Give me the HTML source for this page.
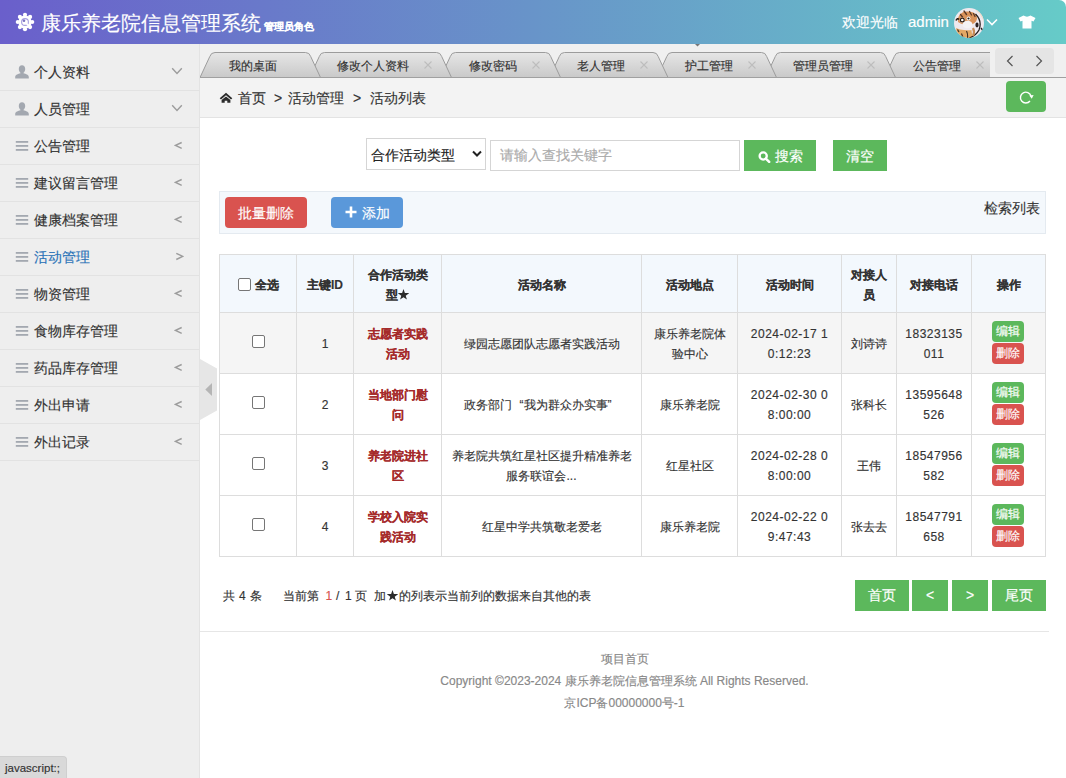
<!DOCTYPE html><html><head><meta charset="utf-8"><style>
*{box-sizing:border-box;margin:0;padding:0}
html,body{width:1066px;height:778px;overflow:hidden;background:#fff;font-family:"Liberation Sans",sans-serif;color:#333;font-size:12px;-webkit-text-stroke-width:0.15px}
.a{position:absolute;white-space:nowrap}
#hdr{position:absolute;left:0;top:0;width:1066px;height:44px;background:linear-gradient(90deg,#6a5fcb 0%,#6894c9 50%,#66cbc8 100%);border-top-right-radius:7px;color:#fff}
#side{position:absolute;left:0;top:44px;width:200px;height:734px;background:#eeeeee;border-right:1px solid #e3e3e3}
.mi{position:absolute;left:0;width:199px;height:37px;border-bottom:1px solid #e2e2e2;font-size:14px;color:#333}
.mi .t{position:absolute;left:34px;top:8px;line-height:20px}
.mi svg{position:absolute}
#tabs{position:absolute;left:200px;top:44px;width:866px;height:34px;background:#f0f0f0}
#crumb{position:absolute;left:200px;top:78px;width:866px;height:40px;background:#f3f3f3;border-bottom:1px solid #e3e3e3}
.btn{position:absolute;color:#fff;text-align:center;font-size:14px;white-space:nowrap}
.g{background:#5cb85c}
.r{background:#d9534f}
.cell{position:absolute;padding-top:2px;display:flex;align-items:center;justify-content:center;text-align:center;line-height:20px;font-size:12px;color:#333}
.th{font-weight:bold}
.num{letter-spacing:0.5px}
.red{color:#a52a2a;font-weight:bold}
.hl{position:absolute;background:#dddddd;height:1px}
.vl{position:absolute;background:#dddddd;width:1px}
.ab{position:absolute;left:992px;width:32px;height:21px;border-radius:4px;color:#fff;font-size:12px;line-height:21px;text-align:center}
</style></head><body>
<div id="hdr">
<svg class="a" style="left:15px;top:12px" width="20" height="20" viewBox="0 0 20 20">
<g fill="#fff">
<circle cx="10" cy="10" r="6.6"/>

<circle cx="17.20" cy="10.00" r="2.1"/>
<circle cx="15.09" cy="15.09" r="2.1"/>
<circle cx="10.00" cy="17.20" r="2.1"/>
<circle cx="4.91" cy="15.09" r="2.1"/>
<circle cx="2.80" cy="10.00" r="2.1"/>
<circle cx="4.91" cy="4.91" r="2.1"/>
<circle cx="10.00" cy="2.80" r="2.1"/>
<circle cx="15.09" cy="4.91" r="2.1"/>
</g><circle cx="10" cy="10" r="3.4" fill="none" stroke="#6a5fcb" stroke-width="1.1" opacity="0.6"/><circle cx="9" cy="8.8" r="1.3" fill="#5a4fb0" opacity="0.8"/><path d="M10 10 L14.5 14.5" stroke="#fff" stroke-width="1.6"/></svg>
<div class="a" style="left:41px;top:10px;font-size:20px;line-height:26px">康乐养老院信息管理系统<span style="font-size:10px;font-weight:bold;margin-left:3px">管理员角色</span></div>
<div class="a" style="left:842px;top:13px;font-size:14px;line-height:18px">欢迎光临</div>
<div class="a" style="left:908px;top:12px;font-size:15px;line-height:20px">admin</div>
<svg class="a" style="left:954px;top:8px" width="30" height="30" viewBox="0 0 30 30">
<defs><clipPath id="cp"><circle cx="15" cy="15" r="15"/></clipPath></defs>
<g clip-path="url(#cp)">
<rect width="30" height="30" fill="#efe9ee"/>
<path d="M22 0 L30 0 L30 14 Q27 6 22 3 Z" fill="#f0dcc8"/>
<path d="M4 10 Q6 4 12 3.5 Q19 3 22 6.5 Q24 10 22 13.5 Q19 17 14 17 Q8 17 4 14 Z" fill="#d9925a"/>
<path d="M10 3 L12.5 6.5 M15.5 3.5 L17.5 7 M19.5 5.5 L21 8.5 M6.5 6.5 L8.5 9" stroke="#5a3826" stroke-width="1.3" stroke-linecap="round"/>
<ellipse cx="13.5" cy="16.5" rx="5" ry="3.8" fill="#f5f2f4"/>
<circle cx="8.3" cy="12" r="2.6" fill="#fff"/>
<circle cx="8.3" cy="12" r="1.9" fill="none" stroke="#2a1a10" stroke-width="1.2"/>
<circle cx="14.5" cy="10.5" r="1.9" fill="#fff"/>
<circle cx="14.5" cy="10.5" r="1.1" fill="#2a1a10"/>
<path d="M2 12.5 Q3.5 9.5 5 11.5" stroke="#2a1a10" stroke-width="1.6" fill="none"/>
<path d="M2 20 Q6 22 10 22 Q15 22.5 17.5 22 L18.5 30 L5 30 Q2 25 2 20 Z" fill="#e2a865"/>
<path d="M12.5 23 Q14 26 13.5 30 M7.5 25.5 L9 29.5 M3.5 21.5 L5 24" stroke="#3b2b20" stroke-width="1.1" fill="none"/>
<path d="M21.5 6 Q28.5 13 25 22 Q22 27.5 15.5 30" stroke="#262020" stroke-width="1.3" fill="none"/>
<ellipse cx="23" cy="17" rx="1.6" ry="2.4" fill="#2a2020"/>
<path d="M19 20 Q21 24 19 28" stroke="#c58a55" stroke-width="2.2" fill="none"/>
<path d="M27 20 L30 24" stroke="#262020" stroke-width="1.4"/>
</g></svg>
<svg class="a" style="left:986px;top:18px" width="12" height="8" viewBox="0 0 12 8"><path d="M1 1.5 L6 6.5 L11 1.5" fill="none" stroke="#fff" stroke-width="1.6"/></svg>
<svg class="a" style="left:1018px;top:15px" width="18" height="14" viewBox="0 0 18 14"><path d="M5.5 0.5 Q9 2.8 12.5 0.5 L17.5 3 L15.5 6.5 L13.5 5.8 L13.5 13.5 L4.5 13.5 L4.5 5.8 L2.5 6.5 L0.5 3 Z" fill="#fff"/></svg>
</div>
<div id="side">
<div class="mi" style="top:10px">
<svg style="left:15px;top:11px" width="14" height="14" viewBox="0 0 14 14"><path d="M7 0.3 C9 0.3 10.2 1.8 10.2 4 C10.2 5.8 9.3 7.2 8.5 7.8 L8.5 8.3 C11 8.9 13.8 10 13.8 12 L13.8 13.6 L0.2 13.6 L0.2 12 C0.2 10 3 8.9 5.5 8.3 L5.5 7.8 C4.7 7.2 3.8 5.8 3.8 4 C3.8 1.8 5 0.3 7 0.3 Z" fill="#a3a8b0"/></svg>
<svg style="left:171px;top:13px" width="12" height="8" viewBox="0 0 12 8"><path d="M1.2 1.2 L6 6.4 L10.8 1.2" fill="none" stroke="#9c9c9c" stroke-width="1.4"/></svg>
<span class="t" style="color:#333">个人资料</span></div>
<div class="mi" style="top:47px">
<svg style="left:15px;top:11px" width="14" height="14" viewBox="0 0 14 14"><path d="M7 0.3 C9 0.3 10.2 1.8 10.2 4 C10.2 5.8 9.3 7.2 8.5 7.8 L8.5 8.3 C11 8.9 13.8 10 13.8 12 L13.8 13.6 L0.2 13.6 L0.2 12 C0.2 10 3 8.9 5.5 8.3 L5.5 7.8 C4.7 7.2 3.8 5.8 3.8 4 C3.8 1.8 5 0.3 7 0.3 Z" fill="#a3a8b0"/></svg>
<svg style="left:171px;top:13px" width="12" height="8" viewBox="0 0 12 8"><path d="M1.2 1.2 L6 6.4 L10.8 1.2" fill="none" stroke="#9c9c9c" stroke-width="1.4"/></svg>
<span class="t" style="color:#333">人员管理</span></div>
<div class="mi" style="top:84px">
<svg style="left:15px;top:13px" width="14" height="12" viewBox="0 0 14 12"><rect x="0.8" y="0" width="12.4" height="1.8" fill="#a3a8b0"/><rect x="0.8" y="4" width="12.4" height="1.8" fill="#a3a8b0"/><rect x="0.8" y="8" width="12.4" height="1.8" fill="#a3a8b0"/></svg>
<svg style="left:174px;top:13px" width="9" height="10" viewBox="0 0 9 10"><path d="M7.7 1.5 L1.5 4.4 L7.7 7.4" fill="none" stroke="#9c9c9c" stroke-width="1.4"/></svg>
<span class="t" style="color:#333">公告管理</span></div>
<div class="mi" style="top:121px">
<svg style="left:15px;top:13px" width="14" height="12" viewBox="0 0 14 12"><rect x="0.8" y="0" width="12.4" height="1.8" fill="#a3a8b0"/><rect x="0.8" y="4" width="12.4" height="1.8" fill="#a3a8b0"/><rect x="0.8" y="8" width="12.4" height="1.8" fill="#a3a8b0"/></svg>
<svg style="left:174px;top:13px" width="9" height="10" viewBox="0 0 9 10"><path d="M7.7 1.5 L1.5 4.4 L7.7 7.4" fill="none" stroke="#9c9c9c" stroke-width="1.4"/></svg>
<span class="t" style="color:#333">建议留言管理</span></div>
<div class="mi" style="top:158px">
<svg style="left:15px;top:13px" width="14" height="12" viewBox="0 0 14 12"><rect x="0.8" y="0" width="12.4" height="1.8" fill="#a3a8b0"/><rect x="0.8" y="4" width="12.4" height="1.8" fill="#a3a8b0"/><rect x="0.8" y="8" width="12.4" height="1.8" fill="#a3a8b0"/></svg>
<svg style="left:174px;top:13px" width="9" height="10" viewBox="0 0 9 10"><path d="M7.7 1.5 L1.5 4.4 L7.7 7.4" fill="none" stroke="#9c9c9c" stroke-width="1.4"/></svg>
<span class="t" style="color:#333">健康档案管理</span></div>
<div class="mi" style="top:195px">
<svg style="left:15px;top:13px" width="14" height="12" viewBox="0 0 14 12"><rect x="0.8" y="0" width="12.4" height="1.8" fill="#a3a8b0"/><rect x="0.8" y="4" width="12.4" height="1.8" fill="#a3a8b0"/><rect x="0.8" y="8" width="12.4" height="1.8" fill="#a3a8b0"/></svg>
<svg style="left:175px;top:13px" width="9" height="10" viewBox="0 0 9 10"><path d="M1.3 1.3 L7.7 4.3 L1.3 7.5" fill="none" stroke="#9c9c9c" stroke-width="1.4"/></svg>
<span class="t" style="color:#2b73b8">活动管理</span></div>
<div class="mi" style="top:232px">
<svg style="left:15px;top:13px" width="14" height="12" viewBox="0 0 14 12"><rect x="0.8" y="0" width="12.4" height="1.8" fill="#a3a8b0"/><rect x="0.8" y="4" width="12.4" height="1.8" fill="#a3a8b0"/><rect x="0.8" y="8" width="12.4" height="1.8" fill="#a3a8b0"/></svg>
<svg style="left:174px;top:13px" width="9" height="10" viewBox="0 0 9 10"><path d="M7.7 1.5 L1.5 4.4 L7.7 7.4" fill="none" stroke="#9c9c9c" stroke-width="1.4"/></svg>
<span class="t" style="color:#333">物资管理</span></div>
<div class="mi" style="top:269px">
<svg style="left:15px;top:13px" width="14" height="12" viewBox="0 0 14 12"><rect x="0.8" y="0" width="12.4" height="1.8" fill="#a3a8b0"/><rect x="0.8" y="4" width="12.4" height="1.8" fill="#a3a8b0"/><rect x="0.8" y="8" width="12.4" height="1.8" fill="#a3a8b0"/></svg>
<svg style="left:174px;top:13px" width="9" height="10" viewBox="0 0 9 10"><path d="M7.7 1.5 L1.5 4.4 L7.7 7.4" fill="none" stroke="#9c9c9c" stroke-width="1.4"/></svg>
<span class="t" style="color:#333">食物库存管理</span></div>
<div class="mi" style="top:306px">
<svg style="left:15px;top:13px" width="14" height="12" viewBox="0 0 14 12"><rect x="0.8" y="0" width="12.4" height="1.8" fill="#a3a8b0"/><rect x="0.8" y="4" width="12.4" height="1.8" fill="#a3a8b0"/><rect x="0.8" y="8" width="12.4" height="1.8" fill="#a3a8b0"/></svg>
<svg style="left:174px;top:13px" width="9" height="10" viewBox="0 0 9 10"><path d="M7.7 1.5 L1.5 4.4 L7.7 7.4" fill="none" stroke="#9c9c9c" stroke-width="1.4"/></svg>
<span class="t" style="color:#333">药品库存管理</span></div>
<div class="mi" style="top:343px">
<svg style="left:15px;top:13px" width="14" height="12" viewBox="0 0 14 12"><rect x="0.8" y="0" width="12.4" height="1.8" fill="#a3a8b0"/><rect x="0.8" y="4" width="12.4" height="1.8" fill="#a3a8b0"/><rect x="0.8" y="8" width="12.4" height="1.8" fill="#a3a8b0"/></svg>
<svg style="left:174px;top:13px" width="9" height="10" viewBox="0 0 9 10"><path d="M7.7 1.5 L1.5 4.4 L7.7 7.4" fill="none" stroke="#9c9c9c" stroke-width="1.4"/></svg>
<span class="t" style="color:#333">外出申请</span></div>
<div class="mi" style="top:380px">
<svg style="left:15px;top:13px" width="14" height="12" viewBox="0 0 14 12"><rect x="0.8" y="0" width="12.4" height="1.8" fill="#a3a8b0"/><rect x="0.8" y="4" width="12.4" height="1.8" fill="#a3a8b0"/><rect x="0.8" y="8" width="12.4" height="1.8" fill="#a3a8b0"/></svg>
<svg style="left:174px;top:13px" width="9" height="10" viewBox="0 0 9 10"><path d="M7.7 1.5 L1.5 4.4 L7.7 7.4" fill="none" stroke="#9c9c9c" stroke-width="1.4"/></svg>
<span class="t" style="color:#333">外出记录</span></div>
</div>
<svg class="a" style="left:200px;top:359px" width="18" height="62" viewBox="0 0 18 62"><path d="M0 0 L17 9.5 L17 51.5 L0 61 Z" fill="#e6e6e6"/><path d="M12 24 L12 37 L5.3 30.5 Z" fill="#b5b5b5"/></svg>
<div id="tabs">
<svg class="a" style="left:0;top:0" width="792" height="34" viewBox="200 44 792 34">
<defs><linearGradient id="tg" x1="0" y1="0" x2="0" y2="1"><stop offset="0" stop-color="#e6e6e6"/><stop offset="1" stop-color="#c9c9c9"/></linearGradient></defs>
<path d="M884.5 77.5 L894.3 56.5 Q895.5 52.5 899.5 52.5 L1000.5 52.5 Q1004.5 52.5 1005.7 56.5 L1015.5 77.5 Z" fill="url(#tg)" stroke="#9c9c9c" stroke-width="1"/>
<path d="M765.5 77.5 L775.3 56.5 Q776.5 52.5 780.5 52.5 L880.5 52.5 Q884.5 52.5 885.7 56.5 L895.5 77.5 Z" fill="url(#tg)" stroke="#9c9c9c" stroke-width="1"/>
<path d="M657.0 77.5 L666.8 56.5 Q668.0 52.5 672.0 52.5 L761.5 52.5 Q765.5 52.5 766.7 56.5 L776.5 77.5 Z" fill="url(#tg)" stroke="#9c9c9c" stroke-width="1"/>
<path d="M549.5 77.5 L559.3 56.5 Q560.5 52.5 564.5 52.5 L653.0 52.5 Q657.0 52.5 658.2 56.5 L668.0 77.5 Z" fill="url(#tg)" stroke="#9c9c9c" stroke-width="1"/>
<path d="M440.5 77.5 L450.3 56.5 Q451.5 52.5 455.5 52.5 L545.5 52.5 Q549.5 52.5 550.7 56.5 L560.5 77.5 Z" fill="url(#tg)" stroke="#9c9c9c" stroke-width="1"/>
<path d="M309.5 77.5 L319.3 56.5 Q320.5 52.5 324.5 52.5 L436.5 52.5 Q440.5 52.5 441.7 56.5 L451.5 77.5 Z" fill="url(#tg)" stroke="#9c9c9c" stroke-width="1"/>
<path d="M200.0 77.5 L209.8 56.5 Q211.0 52.5 215.0 52.5 L305.5 52.5 Q309.5 52.5 310.7 56.5 L320.5 77.5 Z" fill="url(#tg)" stroke="#9c9c9c" stroke-width="1"/>
</svg>
<div class="a" style="left:0;top:33px;width:866px;height:1px;background:#a0a0a0"></div>
<div class="a" style="left:29px;top:14px;font-size:12px;line-height:16px;color:#333">我的桌面</div>
<div class="a" style="left:137px;top:14px;font-size:12px;line-height:16px;color:#333">修改个人资料</div>
<svg class="a" style="left:223px;top:16px" width="10" height="10" viewBox="0 0 10 10"><path d="M1.5 1.5 L8.5 8.5 M8.5 1.5 L1.5 8.5" stroke="#bdbdbd" stroke-width="1.1"/></svg>
<div class="a" style="left:269px;top:14px;font-size:12px;line-height:16px;color:#333">修改密码</div>
<svg class="a" style="left:331px;top:16px" width="10" height="10" viewBox="0 0 10 10"><path d="M1.5 1.5 L8.5 8.5 M8.5 1.5 L1.5 8.5" stroke="#bdbdbd" stroke-width="1.1"/></svg>
<div class="a" style="left:377px;top:14px;font-size:12px;line-height:16px;color:#333">老人管理</div>
<svg class="a" style="left:439px;top:16px" width="10" height="10" viewBox="0 0 10 10"><path d="M1.5 1.5 L8.5 8.5 M8.5 1.5 L1.5 8.5" stroke="#bdbdbd" stroke-width="1.1"/></svg>
<div class="a" style="left:485px;top:14px;font-size:12px;line-height:16px;color:#333">护工管理</div>
<svg class="a" style="left:547px;top:16px" width="10" height="10" viewBox="0 0 10 10"><path d="M1.5 1.5 L8.5 8.5 M8.5 1.5 L1.5 8.5" stroke="#bdbdbd" stroke-width="1.1"/></svg>
<div class="a" style="left:593px;top:14px;font-size:12px;line-height:16px;color:#333">管理员管理</div>
<svg class="a" style="left:666px;top:16px" width="10" height="10" viewBox="0 0 10 10"><path d="M1.5 1.5 L8.5 8.5 M8.5 1.5 L1.5 8.5" stroke="#bdbdbd" stroke-width="1.1"/></svg>
<div class="a" style="left:713px;top:14px;font-size:12px;line-height:16px;color:#333">公告管理</div>
<svg class="a" style="left:775px;top:16px" width="10" height="10" viewBox="0 0 10 10"><path d="M1.5 1.5 L8.5 8.5 M8.5 1.5 L1.5 8.5" stroke="#bdbdbd" stroke-width="1.1"/></svg>
<div class="a" style="left:790px;top:0;width:76px;height:33px;background:#f0f0f0"></div>
<div class="a" style="left:795px;top:4px;width:59px;height:26px;background:#e5e5e5;border-radius:4px"></div>
<svg class="a" style="left:806px;top:11px" width="8" height="12" viewBox="0 0 8 12"><path d="M6.5 1 L1.5 6 L6.5 11" fill="none" stroke="#555" stroke-width="1.2"/></svg>
<svg class="a" style="left:835px;top:11px" width="8" height="12" viewBox="0 0 8 12"><path d="M1.5 1 L6.5 6 L1.5 11" fill="none" stroke="#555" stroke-width="1.2"/></svg>
<svg class="a" style="left:495px;top:0px" width="5" height="3" viewBox="0 0 5 3"><path d="M0 0 L5 0 L2.5 2.5 Z" fill="#777"/></svg>
</div>
<div id="crumb">
<svg class="a" style="left:19px;top:14px" width="14" height="12" viewBox="0 0 14 12"><path d="M7 0.8 L13.3 6.2 L12.0 7.4 L7 3.2 L2.0 7.4 L0.7 6.2 Z" fill="#2b2b2b"/><path d="M2.6 7.9 L7 4.4 L11.4 7.9 L11.4 10.8 L8.3 10.8 L8.3 8.8 L5.7 8.8 L5.7 10.8 L2.6 10.8 Z" fill="#2b2b2b"/></svg>
<div class="a" style="left:38px;top:10px;font-size:14px;line-height:20px">首页</div>
<div class="a" style="left:74px;top:10px;font-size:14px;line-height:20px">&gt;</div>
<div class="a" style="left:88px;top:10px;font-size:14px;line-height:20px">活动管理</div>
<div class="a" style="left:153px;top:10px;font-size:14px;line-height:20px">&gt;</div>
<div class="a" style="left:170px;top:10px;font-size:14px;line-height:20px">活动列表</div>
<div class="a" style="left:806px;top:3px;width:40px;height:31px;background:#5cb85c;border-radius:4px"></div>
<svg class="a" style="left:818px;top:12px" width="17" height="16" viewBox="0 0 17 16"><path d="M12.0 11.0 A5.4 5.4 0 1 1 13.0 6.0" fill="none" stroke="#fff" stroke-width="1.4"/><path d="M13.8 8.8 L11.3 5.6 L15.6 5.0 Z" fill="#fff"/></svg>
</div>
<div class="a" style="left:366px;top:138px;width:120px;height:32px;border:1px solid #d5d5d5;background:#fff"></div>
<div class="a" style="left:371px;top:145px;font-size:14px;line-height:20px;color:#222">合作活动类型</div>
<svg class="a" style="left:472px;top:150px" width="10" height="8" viewBox="0 0 10 8"><path d="M1 1.5 L5 5.5 L9 1.5" fill="none" stroke="#222" stroke-width="2"/></svg>
<div class="a" style="left:490px;top:140px;width:250px;height:31px;border:1px solid #d5d5d5;background:#fff"></div>
<div class="a" style="left:500px;top:145px;font-size:14px;line-height:20px;color:#aaa">请输入查找关键字</div>
<div class="btn g" style="left:744px;top:140px;width:72px;height:31px"></div>
<svg class="a" style="left:757.5px;top:150.5px" width="13" height="12" viewBox="0 0 13 12"><circle cx="5.2" cy="5" r="3.6" fill="none" stroke="#fff" stroke-width="2.3"/><path d="M7.8 7.6 L11.2 10.8" stroke="#fff" stroke-width="2.5" stroke-linecap="round"/></svg>
<div class="a" style="left:775px;top:146px;font-size:14px;line-height:20px;color:#fff">搜索</div>
<div class="btn g" style="left:833px;top:140px;width:54px;height:31px;line-height:33px">清空</div>
<div class="a" style="left:219px;top:191px;width:827px;height:43px;background:#f4f8fc;border:1px solid #e4eaf0"></div>
<div class="btn r" style="left:225px;top:197px;width:82px;height:31px;line-height:33px;border-radius:4px">批量删除</div>
<div class="btn" style="left:331px;top:197px;width:72px;height:31px;line-height:31px;border-radius:4px;background:#5a98da"></div>
<svg class="a" style="left:345px;top:206px" width="12" height="12" viewBox="0 0 12 12"><path d="M6 0.5 V11.5 M0.5 6 H11.5" stroke="#fff" stroke-width="2.6"/></svg>
<div class="a" style="left:362px;top:203px;font-size:14px;line-height:20px;color:#fff">添加</div>
<div class="a" style="left:984px;top:198px;font-size:14px;line-height:20px;color:#333">检索列表</div>
<div class="a" style="left:219px;top:254px;width:827px;height:58px;background:#f3f8fd"></div>
<div class="a" style="left:219px;top:312px;width:827px;height:61px;background:#f5f5f5"></div>
<div class="hl" style="left:219px;top:254px;width:827px"></div>
<div class="hl" style="left:219px;top:312px;width:827px"></div>
<div class="hl" style="left:219px;top:373px;width:827px"></div>
<div class="hl" style="left:219px;top:434px;width:827px"></div>
<div class="hl" style="left:219px;top:495px;width:827px"></div>
<div class="hl" style="left:219px;top:556px;width:827px"></div>
<div class="vl" style="left:219px;top:254px;height:303px"></div>
<div class="vl" style="left:296px;top:254px;height:303px"></div>
<div class="vl" style="left:353px;top:254px;height:303px"></div>
<div class="vl" style="left:441px;top:254px;height:303px"></div>
<div class="vl" style="left:641px;top:254px;height:303px"></div>
<div class="vl" style="left:737px;top:254px;height:303px"></div>
<div class="vl" style="left:841px;top:254px;height:303px"></div>
<div class="vl" style="left:896px;top:254px;height:303px"></div>
<div class="vl" style="left:971px;top:254px;height:303px"></div>
<div class="vl" style="left:1045px;top:254px;height:303px"></div>
<div class="cell th" style="left:220px;top:255px;width:76px;height:57px"><div><span style="position:relative;top:-1px"><span style="display:inline-block;width:13px;height:13px;border:1px solid #767676;border-radius:2px;background:#fff;vertical-align:middle"></span></span><span style="margin-left:4px">全选</span></div></div>
<div class="cell th" style="left:297px;top:255px;width:56px;height:57px"><div>主键ID</div></div>
<div class="cell th" style="left:354px;top:255px;width:87px;height:57px"><div>合作活动类<br>型<svg width="11" height="11" viewBox="0 0 11 11" style="vertical-align:-1px"><polygon points="5.50,0.10 6.88,4.00 11.02,4.11 7.73,6.63 8.91,10.59 5.50,8.25 2.09,10.59 3.27,6.63 -0.02,4.11 4.12,4.00" fill="#2b2b2b"/></svg></div></div>
<div class="cell th" style="left:442px;top:255px;width:199px;height:57px"><div>活动名称</div></div>
<div class="cell th" style="left:642px;top:255px;width:95px;height:57px"><div>活动地点</div></div>
<div class="cell th" style="left:738px;top:255px;width:103px;height:57px"><div>活动时间</div></div>
<div class="cell th" style="left:842px;top:255px;width:54px;height:57px"><div>对接人<br>员</div></div>
<div class="cell th" style="left:897px;top:255px;width:74px;height:57px"><div>对接电话</div></div>
<div class="cell th" style="left:972px;top:255px;width:73px;height:57px"><div>操作</div></div>
<div class="cell " style="left:220px;top:313px;width:76px;height:60px"><div><span style="position:relative;top:-3px"><span style="display:inline-block;width:13px;height:13px;border:1px solid #767676;border-radius:2px;background:#fff;vertical-align:middle"></span></span></div></div>
<div class="cell " style="left:297px;top:313px;width:56px;height:60px"><div>1</div></div>
<div class="cell red" style="left:354px;top:313px;width:87px;height:60px"><div>志愿者实践<br>活动</div></div>
<div class="cell " style="left:442px;top:313px;width:199px;height:60px"><div>绿园志愿团队志愿者实践活动</div></div>
<div class="cell " style="left:642px;top:313px;width:95px;height:60px"><div>康乐养老院体<br>验中心</div></div>
<div class="cell num" style="left:738px;top:313px;width:103px;height:60px"><div>2024-02-17 1<br>0:12:23</div></div>
<div class="cell " style="left:842px;top:313px;width:54px;height:60px"><div>刘诗诗</div></div>
<div class="cell num" style="left:897px;top:313px;width:74px;height:60px"><div>18323135<br>011</div></div>
<div class="ab g" style="top:321px">编辑</div>
<div class="ab r" style="top:343px">删除</div>
<div class="cell " style="left:220px;top:374px;width:76px;height:60px"><div><span style="position:relative;top:-3px"><span style="display:inline-block;width:13px;height:13px;border:1px solid #767676;border-radius:2px;background:#fff;vertical-align:middle"></span></span></div></div>
<div class="cell " style="left:297px;top:374px;width:56px;height:60px"><div>2</div></div>
<div class="cell red" style="left:354px;top:374px;width:87px;height:60px"><div>当地部门慰<br>问</div></div>
<div class="cell " style="left:442px;top:374px;width:199px;height:60px"><div>政务部门<span style="display:inline-block;width:12px;text-align:right">“</span>我为群众办实事<span style="display:inline-block;width:12px;text-align:left">”</span></div></div>
<div class="cell " style="left:642px;top:374px;width:95px;height:60px"><div>康乐养老院</div></div>
<div class="cell num" style="left:738px;top:374px;width:103px;height:60px"><div>2024-02-30 0<br>8:00:00</div></div>
<div class="cell " style="left:842px;top:374px;width:54px;height:60px"><div>张科长</div></div>
<div class="cell num" style="left:897px;top:374px;width:74px;height:60px"><div>13595648<br>526</div></div>
<div class="ab g" style="top:382px">编辑</div>
<div class="ab r" style="top:404px">删除</div>
<div class="cell " style="left:220px;top:435px;width:76px;height:60px"><div><span style="position:relative;top:-3px"><span style="display:inline-block;width:13px;height:13px;border:1px solid #767676;border-radius:2px;background:#fff;vertical-align:middle"></span></span></div></div>
<div class="cell " style="left:297px;top:435px;width:56px;height:60px"><div>3</div></div>
<div class="cell red" style="left:354px;top:435px;width:87px;height:60px"><div>养老院进社<br>区</div></div>
<div class="cell " style="left:442px;top:435px;width:199px;height:60px"><div>养老院共筑红星社区提升精准养老<br>服务联谊会...</div></div>
<div class="cell " style="left:642px;top:435px;width:95px;height:60px"><div>红星社区</div></div>
<div class="cell num" style="left:738px;top:435px;width:103px;height:60px"><div>2024-02-28 0<br>8:00:00</div></div>
<div class="cell " style="left:842px;top:435px;width:54px;height:60px"><div>王伟</div></div>
<div class="cell num" style="left:897px;top:435px;width:74px;height:60px"><div>18547956<br>582</div></div>
<div class="ab g" style="top:443px">编辑</div>
<div class="ab r" style="top:465px">删除</div>
<div class="cell " style="left:220px;top:496px;width:76px;height:60px"><div><span style="position:relative;top:-3px"><span style="display:inline-block;width:13px;height:13px;border:1px solid #767676;border-radius:2px;background:#fff;vertical-align:middle"></span></span></div></div>
<div class="cell " style="left:297px;top:496px;width:56px;height:60px"><div>4</div></div>
<div class="cell red" style="left:354px;top:496px;width:87px;height:60px"><div>学校入院实<br>践活动</div></div>
<div class="cell " style="left:442px;top:496px;width:199px;height:60px"><div>红星中学共筑敬老爱老</div></div>
<div class="cell " style="left:642px;top:496px;width:95px;height:60px"><div>康乐养老院</div></div>
<div class="cell num" style="left:738px;top:496px;width:103px;height:60px"><div>2024-02-22 0<br>9:47:43</div></div>
<div class="cell " style="left:842px;top:496px;width:54px;height:60px"><div>张去去</div></div>
<div class="cell num" style="left:897px;top:496px;width:74px;height:60px"><div>18547791<br>658</div></div>
<div class="ab g" style="top:504px">编辑</div>
<div class="ab r" style="top:526px">删除</div>
<div class="a" style="left:222.6px;top:586px;font-size:12px;line-height:20px;color:#333;word-spacing:1px">共 4 条</div>
<div class="a" style="left:282.6px;top:586px;font-size:12px;line-height:20px;color:#333">当前第</div>
<div class="a" style="left:325.5px;top:586px;font-size:12px;line-height:20px;color:#d9534f">1</div>
<div class="a" style="left:336px;top:586px;font-size:12px;line-height:20px;color:#333">/</div>
<div class="a" style="left:345px;top:586px;font-size:12px;line-height:20px;color:#333">1</div>
<div class="a" style="left:355px;top:586px;font-size:12px;line-height:20px;color:#333">页</div>
<div class="a" style="left:374.2px;top:586px;font-size:12px;line-height:20px;color:#333">加<span style="display:inline-block;width:13px;text-align:center"><svg width="11" height="11" viewBox="0 0 11 11" style="vertical-align:-1px"><polygon points="5.50,0.10 6.88,4.00 11.02,4.11 7.73,6.63 8.91,10.59 5.50,8.25 2.09,10.59 3.27,6.63 -0.02,4.11 4.12,4.00" fill="#2b2b2b"/></svg></span>的列表示当前列的数据来自其他的表</div>
<div class="btn g" style="left:855px;top:580px;width:54px;height:31px;line-height:31px">首页</div>
<div class="btn g" style="left:912px;top:580px;width:36px;height:31px;line-height:31px">&lt;</div>
<div class="btn g" style="left:952px;top:580px;width:36px;height:31px;line-height:31px">&gt;</div>
<div class="btn g" style="left:992px;top:580px;width:54px;height:31px;line-height:31px">尾页</div>
<div class="a" style="left:200px;top:631px;width:849px;height:1px;background:#e6e6e6"></div>
<div class="a" style="left:200px;top:648px;width:849px;text-align:center;font-size:12px;line-height:22px;color:#888">项目首页<br>Copyright ©2023-2024 康乐养老院信息管理系统 All Rights Reserved.<br>京ICP备00000000号-1</div>
<div class="a" style="left:0;top:756px;width:67px;height:22px;background:#d9d9d9;border-top-right-radius:4px;border:1px solid #cfcfcf;border-left:none;border-bottom:none"></div>
<div class="a" style="left:5px;top:760px;font-size:11.5px;line-height:16px;color:#333">javascript:;</div>
</body></html>
